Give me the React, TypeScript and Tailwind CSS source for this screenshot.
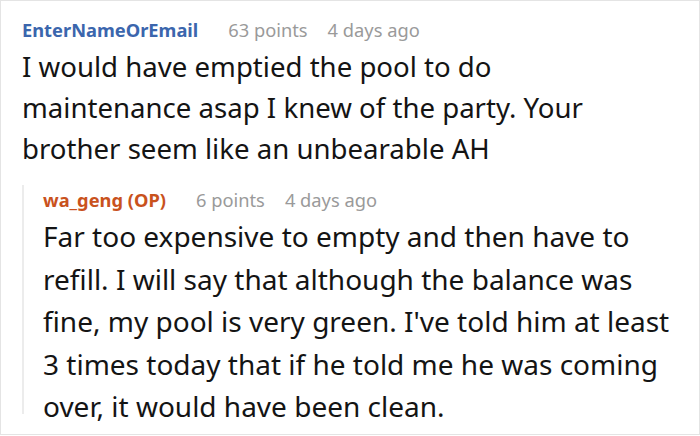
const firstLines = [
  "I would have emptied the pool to do",
  "maintenance asap I knew of the party. Your",
  "brother seem like an unbearable AH",
];

const replyLines = [
  "Far too expensive to empty and then have to",
  "refill. I will say that although the balance was",
  "fine, my pool is very green. I've told him at least",
  "3 times today that if he told me he was coming",
  "over, it would have been clean.",
];

export default function App() {
  return (
    <div className="w-[700px] h-[436px] bg-white overflow-hidden" style={{ fontFamily: '"Noto Sans", sans-serif' }}>
      <div className="h-[435px] border border-[#e4e4e4] pl-[21px] pt-[16px]">
        <div className="flex items-baseline text-[18.3px] leading-[26px]">
          <span className="font-bold text-[#3b66ad]">EnterNameOrEmail</span>
          <span className="ml-[30px] text-[#9a9a9a]">63 points</span>
          <span className="ml-[20px] text-[#9a9a9a]">4 days ago</span>
        </div>
        <p className="mt-[3px] text-[27.6px] leading-[41px] text-[#141414]">
          {firstLines.map((line) => (
            <span key={line} className="block whitespace-nowrap">
              {line}
            </span>
          ))}
        </p>
        <div className="mt-[16px] h-[229px] border-l-2 border-[#ececec] pl-[19px] pt-[2px]">
          <div className="flex items-baseline text-[18.3px] leading-[26px]">
            <span className="font-bold text-[#c9521d]">wa_geng (OP)</span>
            <span className="ml-[30px] text-[#9a9a9a]">6 points</span>
            <span className="ml-[20px] text-[#9a9a9a]">4 days ago</span>
          </div>
          <p className="mt-[2px] text-[28px] leading-[42.5px] text-[#141414]">
            {replyLines.map((line) => (
              <span key={line} className="block whitespace-nowrap">
                {line}
              </span>
            ))}
          </p>
        </div>
      </div>
    </div>
  );
}
